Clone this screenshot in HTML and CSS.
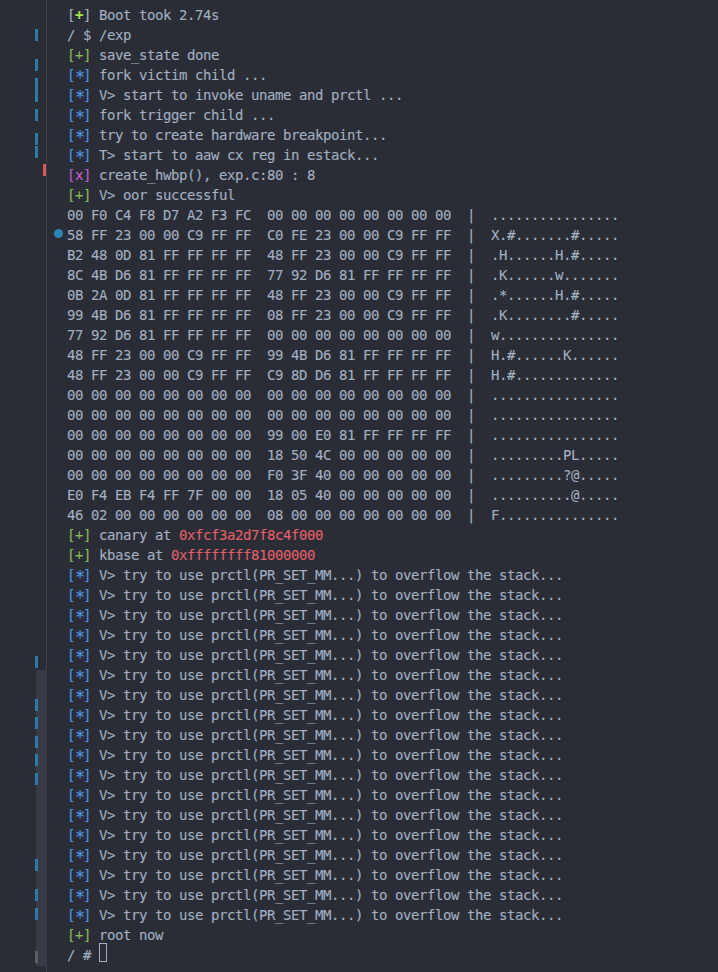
FILE: index.html
```html
<!DOCTYPE html>
<html lang="en">
<head>
<meta charset="utf-8">
<title>Terminal</title>
<link rel="stylesheet" href="styles.css">
</head>
<body>
<div class="editor">
<div class="gutter">
<div class="fold"></div>
<i class="mark" style="top:29px;height:12px"></i>
<i class="mark" style="top:59px;height:12px"></i>
<i class="mark" style="top:78px;height:24px"></i>
<i class="mark" style="top:109px;height:12px"></i>
<i class="mark" style="top:133px;height:12px"></i>
<i class="mark" style="top:146px;height:12px"></i>
<i class="mark err" style="top:164px;height:12px"></i>
<i class="dot"></i>
<i class="mark" style="top:656px;height:12px"></i>
<i class="mark" style="top:699px;height:12px"></i>
<i class="mark" style="top:717px;height:12px"></i>
<i class="mark" style="top:736px;height:12px"></i>
<i class="mark" style="top:754px;height:12px"></i>
<i class="mark" style="top:773px;height:12px"></i>
<i class="mark" style="top:859px;height:12px"></i>
<i class="mark" style="top:889px;height:12px"></i>
<i class="mark" style="top:908px;height:12px"></i>
<i class="mark idle" style="top:951px;height:12px"></i>
</div>
<pre class="term"><span class="tag">[<b class="boot">+</b>]</span> Boot took 2.74s
/ $ /exp
<span class="tag g">[+]</span> save_state done
<span class="tag b">[<span class="star">*</span>]</span> fork victim child ...
<span class="tag b">[<span class="star">*</span>]</span> V> start to invoke uname and prctl ...
<span class="tag b">[<span class="star">*</span>]</span> fork trigger child ...
<span class="tag b">[<span class="star">*</span>]</span> try to create hardware breakpoint...
<span class="tag b">[<span class="star">*</span>]</span> T> start to aaw cx reg in estack...
<span class="tag m">[<span class="x">x</span>]</span> create_hwbp(), exp.c:80 : 8
<span class="tag g">[+]</span> V> oor successful
00 F0 C4 F8 D7 A2 F3 FC  00 00 00 00 00 00 00 00  |  ................
58 FF 23 00 00 C9 FF FF  C0 FE 23 00 00 C9 FF FF  |  X.#.......#.....
B2 48 0D 81 FF FF FF FF  48 FF 23 00 00 C9 FF FF  |  .H......H.#.....
8C 4B D6 81 FF FF FF FF  77 92 D6 81 FF FF FF FF  |  .K......w.......
0B 2A 0D 81 FF FF FF FF  48 FF 23 00 00 C9 FF FF  |  .*......H.#.....
99 4B D6 81 FF FF FF FF  08 FF 23 00 00 C9 FF FF  |  .K........#.....
77 92 D6 81 FF FF FF FF  00 00 00 00 00 00 00 00  |  w...............
48 FF 23 00 00 C9 FF FF  99 4B D6 81 FF FF FF FF  |  H.#......K......
48 FF 23 00 00 C9 FF FF  C9 8D D6 81 FF FF FF FF  |  H.#.............
00 00 00 00 00 00 00 00  00 00 00 00 00 00 00 00  |  ................
00 00 00 00 00 00 00 00  00 00 00 00 00 00 00 00  |  ................
00 00 00 00 00 00 00 00  99 00 E0 81 FF FF FF FF  |  ................
00 00 00 00 00 00 00 00  18 50 4C 00 00 00 00 00  |  .........PL.....
00 00 00 00 00 00 00 00  F0 3F 40 00 00 00 00 00  |  .........?@.....
E0 F4 EB F4 FF 7F 00 00  18 05 40 00 00 00 00 00  |  ..........@.....
46 02 00 00 00 00 00 00  08 00 00 00 00 00 00 00  |  F...............
<span class="tag g">[+]</span> canary at <span class="r">0xfcf3a2d7f8c4f000</span>
<span class="tag g">[+]</span> kbase at <span class="r">0xffffffff81000000</span>
<span class="tag b">[<span class="star">*</span>]</span> V> try to use prctl(PR_SET_MM...) to overflow the stack...
<span class="tag b">[<span class="star">*</span>]</span> V> try to use prctl(PR_SET_MM...) to overflow the stack...
<span class="tag b">[<span class="star">*</span>]</span> V> try to use prctl(PR_SET_MM...) to overflow the stack...
<span class="tag b">[<span class="star">*</span>]</span> V> try to use prctl(PR_SET_MM...) to overflow the stack...
<span class="tag b">[<span class="star">*</span>]</span> V> try to use prctl(PR_SET_MM...) to overflow the stack...
<span class="tag b">[<span class="star">*</span>]</span> V> try to use prctl(PR_SET_MM...) to overflow the stack...
<span class="tag b">[<span class="star">*</span>]</span> V> try to use prctl(PR_SET_MM...) to overflow the stack...
<span class="tag b">[<span class="star">*</span>]</span> V> try to use prctl(PR_SET_MM...) to overflow the stack...
<span class="tag b">[<span class="star">*</span>]</span> V> try to use prctl(PR_SET_MM...) to overflow the stack...
<span class="tag b">[<span class="star">*</span>]</span> V> try to use prctl(PR_SET_MM...) to overflow the stack...
<span class="tag b">[<span class="star">*</span>]</span> V> try to use prctl(PR_SET_MM...) to overflow the stack...
<span class="tag b">[<span class="star">*</span>]</span> V> try to use prctl(PR_SET_MM...) to overflow the stack...
<span class="tag b">[<span class="star">*</span>]</span> V> try to use prctl(PR_SET_MM...) to overflow the stack...
<span class="tag b">[<span class="star">*</span>]</span> V> try to use prctl(PR_SET_MM...) to overflow the stack...
<span class="tag b">[<span class="star">*</span>]</span> V> try to use prctl(PR_SET_MM...) to overflow the stack...
<span class="tag b">[<span class="star">*</span>]</span> V> try to use prctl(PR_SET_MM...) to overflow the stack...
<span class="tag b">[<span class="star">*</span>]</span> V> try to use prctl(PR_SET_MM...) to overflow the stack...
<span class="tag b">[<span class="star">*</span>]</span> V> try to use prctl(PR_SET_MM...) to overflow the stack...
<span class="tag g">[+]</span> root now
/ # <span class="cursor"></span></pre>
</div>
</body>
</html>
```
FILE: styles.css
```css
html, body {
  margin: 0;
  height: 100%;
  background: #2a2d36;
  overflow: hidden;
}
.editor {
  display: flex;
  height: 972px;
}
.gutter {
  position: relative;
  flex: none;
  width: 46px;
  border-right: 1px solid #3e424d;
}
.fold {
  position: absolute;
  left: 36px;
  right: -1px;
  top: 670px;
  height: 296px;
  background: #383b46;
}
.mark {
  position: absolute;
  left: 35px;
  width: 3px;
  background: #2b7ba8;
}
.mark.err {
  left: 43px;
  background: #e0565c;
}
.mark.idle {
  background: #5c5f68;
}
.dot {
  position: absolute;
  left: 54px;
  top: 229px;
  width: 9px;
  height: 9px;
  border-radius: 50%;
  background: #2e86b5;
}
.term {
  margin: 0;
  padding: 5px 0 0 20px;
  font-family: "DejaVu Sans Mono", "Liberation Mono", monospace;
  font-size: 14px;
  letter-spacing: -0.4287px;
  line-height: 20px;
  color: #a2afc0;
  -webkit-text-stroke: 0.12px currentColor;
  white-space: pre;
}
.tag {
  display: inline-block;
  width: 24px;
}
.g { color: #88b858; }
.b { color: #4f93e0; }
.m { color: #b45ed0; }
.x { color: #d060d8; }
.r { color: #e0606a; }
.boot { color: #a4e04e; font-weight: 700; }
.star {
  display: inline-block;
  width: 8px;
  height: 10px;
  text-align: center;
  font-size: 17px;
  line-height: 10px;
  letter-spacing: 0;
  vertical-align: -3px;
}
.cursor {
  display: inline-block;
  box-sizing: border-box;
  width: 8px;
  height: 19px;
  margin-top: -4px;
  border: 1px solid #a2afc0;
  vertical-align: -2px;
}
```
